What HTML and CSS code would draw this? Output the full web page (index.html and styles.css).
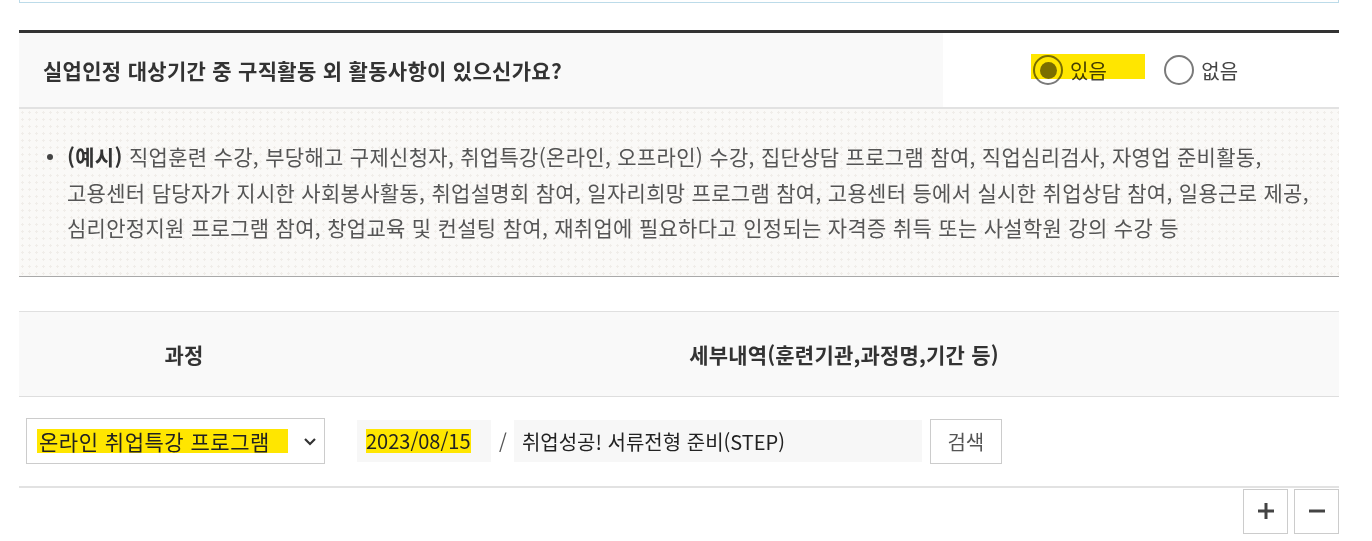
FILE: index.html
```html
<!DOCTYPE html>
<html lang="ko">
<head>
  <meta charset="UTF-8">
  <meta name="viewport" content="width=device-width, initial-scale=1.0">
  <title>구직활동 외 활동사항</title>
  <link rel="stylesheet" href="styles.css">
</head>
<body>
  <div class="notice"></div>

  <div class="wrap">
    <table class="q-table">
      <tr>
        <th>실업인정 대상기간 중 구직활동 외 활동사항이 있으신가요?</th>
        <td class="radio-cell">
          <label class="radio checked"><span class="circle"></span>있음</label>
          <label class="radio"><span class="circle"></span>없음</label>
          <span class="hl hl-radio"></span>
        </td>
      </tr>
    </table>

    <div class="example">
      <ul>
        <li><b>(예시)</b> 직업훈련 수강, 부당해고 구제신청자, 취업특강(온라인, 오프라인) 수강, 집단상담 프로그램 참여, 직업심리검사, 자영업 준비활동,<br>고용센터 담당자가 지시한 사회봉사활동, 취업설명회 참여, 일자리희망 프로그램 참여, 고용센터 등에서 실시한 취업상담 참여, 일용근로 제공,<br>심리안정지원 프로그램 참여, 창업교육 및 컨설팅 참여, 재취업에 필요하다고 인정되는 자격증 취득 또는 사설학원 강의 수강 등</li>
      </ul>
    </div>

    <table class="list-table">
      <thead>
        <tr>
          <th class="col-course">과정</th>
          <th>세부내역(훈련기관,과정명,기간 등)</th>
        </tr>
      </thead>
      <tbody>
        <tr>
          <td class="col-course">
            <div class="select">
              <span class="mark mark-select">온라인 취업특강 프로그램</span>
              <svg class="chevron" width="14" height="9" viewBox="0 0 14 9"><polyline points="2,2 7,7 12,2" fill="none" stroke="#333" stroke-width="2.2"/></svg>
            </div>
          </td>
          <td>
            <div class="detail">
              <div class="field date"><span class="mark">2023/08/15</span></div>
              <span class="slash">/</span>
              <div class="field name">취업성공! 서류전형 준비(STEP)</div>
              <button class="btn-search">검색</button>
            </div>
          </td>
        </tr>
      </tbody>
    </table>

    <div class="row-btns">
      <button class="btn-sq" title="추가">
        <svg width="18" height="18" viewBox="0 0 18 18"><path d="M9 1v16M1 9h16" stroke="#444" stroke-width="3"/></svg>
      </button>
      <button class="btn-sq" title="삭제">
        <svg width="18" height="18" viewBox="0 0 18 18"><path d="M1 9h16" stroke="#444" stroke-width="3"/></svg>
      </button>
    </div>
  </div>
</body>
</html>
```

FILE: styles.css
```css
body {
  margin: 0;
  font-family: "Noto Sans CJK KR", "Noto Sans", sans-serif;
  color: #333;
  background: #fff;
}

.notice {
  margin: 0 33px 0 19px;
  height: 2px;
  border: 1px solid #bcdbe9;
  border-top: 0;
}

.wrap {
  margin: 27px 33px 0 19px;
}

/* question row */
.q-table {
  width: 100%;
  border-collapse: collapse;
  border-top: 3px solid #333;
}

.q-table th {
  width: 900px;
  height: 74px;
  padding: 0 0 0 24px;
  background: #f9f9f9;
  text-align: left;
  font-size: 21px;
  letter-spacing: 0.3px;
  font-weight: 700;
  color: #333;
  border-bottom: 2px solid #e2e2e2;
}

.radio-cell {
  position: relative;
  padding: 0 0 0 90px;
  border-bottom: 2px solid #e2e2e2;
  white-space: nowrap;
}

.radio {
  display: inline-flex;
  align-items: center;
  gap: 7px;
  font-size: 20px;
  color: #444;
  vertical-align: middle;
}

.radio + .radio {
  margin-left: 53px;
}

.circle {
  box-sizing: border-box;
  width: 30px;
  height: 30px;
  border: 2px solid #7a7a7a;
  border-radius: 50%;
  display: flex;
  align-items: center;
  justify-content: center;
}

.radio.checked .circle::after {
  content: "";
  width: 17px;
  height: 17px;
  border-radius: 50%;
  background: #7a7a7a;
}

/* marker highlight laid over the radio */
.hl {
  position: absolute;
  background: #ffe600;
  mix-blend-mode: multiply;
}

.hl-radio {
  left: 88px;
  top: 21px;
  width: 114px;
  height: 25px;
}

.mark {
  background: #ffe600;
}

/* example box */
.example {
  padding: 30px 20px 30px 48px;
  background-color: #faf9f7;
  background-image: radial-gradient(#f0ede9 1px, transparent 1.2px);
  background-size: 7px 7px;
  border-bottom: 1px solid #a9a9a9;
}

.example ul {
  margin: 0;
  padding: 0;
  list-style: none;
}

.example li {
  position: relative;
  font-size: 21px;
  letter-spacing: 0.3px;
  line-height: 35.5px;
  color: #555;
  white-space: nowrap;
}

.example li::before {
  content: "";
  position: absolute;
  left: -20px;
  top: 15px;
  width: 6px;
  height: 6px;
  border-radius: 50%;
  background: #444;
}

.example b {
  color: #333;
}

/* course list */
.list-table {
  width: 100%;
  margin-top: 34px;
  border-collapse: collapse;
  border-top: 1px solid #e0e0e0;
}

.list-table th {
  height: 82px;
  background: #f9f9f9;
  font-size: 21px;
  letter-spacing: 0.2px;
  font-weight: 700;
  color: #333;
  border-bottom: 1px solid #dedede;
}

.list-table .col-course {
  width: 328px;
}

.list-table td {
  height: 89px;
  padding: 0;
  border-bottom: 2px solid #e2e2e2;
}

td.col-course {
  padding-left: 7px;
  box-sizing: border-box;
}

.select {
  box-sizing: border-box;
  width: 299px;
  height: 46px;
  border: 1px solid #ccc;
  display: flex;
  align-items: center;
  justify-content: space-between;
  padding: 0 5px 0 10px;
  font-size: 21px;
  letter-spacing: 0.5px;
  color: #222;
}

.mark-select {
  padding: 0 18px 0 2px;
  line-height: 24px;
}

.chevron {
  margin-right: 2px;
}

.detail {
  display: flex;
  align-items: center;
  padding-left: 8px;
}

.field {
  box-sizing: border-box;
  height: 42px;
  background: #f7f7f7;
  display: flex;
  align-items: center;
  font-size: 20px;
  color: #222;
}

.date {
  width: 134px;
  padding-left: 9px;
}

.date .mark {
  line-height: 24px;
}

.slash {
  margin: 0 7px 0 8px;
  font-size: 20px;
  color: #555;
}

.name {
  width: 408px;
  padding-left: 8px;
}

.btn-search {
  box-sizing: border-box;
  margin-left: 8px;
  width: 72px;
  height: 45px;
  border: 1px solid #ccc;
  background: #fff;
  font-family: inherit;
  font-size: 20px;
  color: #555;
  padding: 0;
}

.row-btns {
  display: flex;
  justify-content: flex-end;
  gap: 6px;
  margin-top: 1px;
}

.btn-sq {
  box-sizing: border-box;
  width: 45px;
  height: 45px;
  border: 1px solid #ccc;
  background: #fff;
  padding: 0;
  display: flex;
  align-items: center;
  justify-content: center;
}
```
